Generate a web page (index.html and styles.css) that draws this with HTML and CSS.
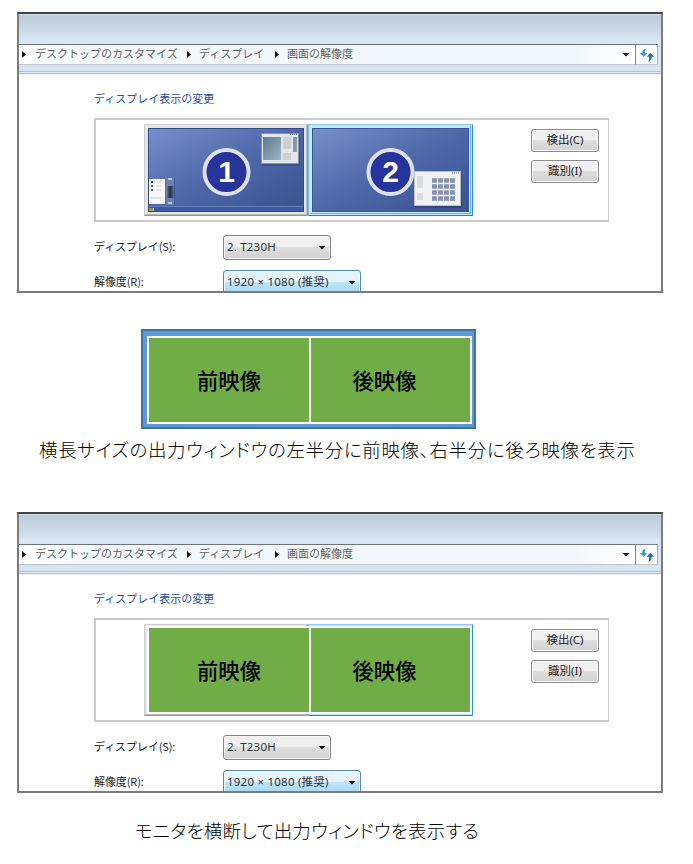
FILE: index.html
```html
<!DOCTYPE html>
<html lang="ja">
<head>
<meta charset="utf-8">
<title>画面の解像度</title>
<link rel="stylesheet" href="styles.css">
</head>
<body>
<main class="page">
  <section class="window">
    <header class="titlebar"></header>
    <nav class="address">
      <div class="crumbs">
        <i class="sep"></i><span class="crumb desktop">デスクトップのカスタマイズ</span>
        <i class="sep"></i><span class="crumb display">ディスプレイ</span>
        <i class="sep"></i><span class="crumb resolution">画面の解像度</span>
        <i class="down"></i>
      </div>
      <div class="refresh">
        <svg width="14" height="14" viewBox="0 0 14 14"><path d="M6 1C3.500 1 2 2.500 2.200 5H0l3.800 4L7.200 5H5C4.700 3.300 4.800 2.100 6 1Z" fill="#3c9bdc"/><path d="M8.200 13.500c2.600-.6 3.700-2.400 3.400-4.800H14L10.200 4.800 6.700 8.700H9c.3 2 .2 3.400-.8 4.800Z" fill="#2468b5"/></svg>
      </div>
    </nav>
    <div class="strip"></div>
    <div class="content">
      <h1 class="heading">ディスプレイ表示の変更</h1>
      <div class="group">
        <div class="monitors">
          <div class="monitor first">
            <svg width="156" height="84" viewBox="0 0 156 84">
              <defs>
                <linearGradient id="desk" x1="0" y1="0" x2="1" y2="1"><stop stop-color="#7890cc"/><stop offset=".5" stop-color="#4d67a9"/><stop offset="1" stop-color="#38528f"/></linearGradient>
                <linearGradient id="pane" x1="0" y1="0" x2="1" y2="1"><stop stop-color="#5f7b8f"/><stop offset="1" stop-color="#9db4c2"/></linearGradient>
                <linearGradient id="shade"><stop stop-color="#8b96ad"/><stop offset=".5" stop-color="#202b46"/><stop offset="1" stop-color="#5a6f9e"/></linearGradient>
              </defs>
              <rect width="156" height="84" fill="url(#desk)"/>
              <rect y="78" width="156" height="1" fill="#6580bb"/><rect y="79" width="156" height="5" fill="#3a5aa6"/>
              <rect x="114" y="7" width="38" height="31" fill="#283e75" opacity=".5"/>
              <rect x="113.500" y="5.500" width="37" height="30" fill="#e3e6e8" stroke="#8a93a3"/>
              <rect x="115" y="9" width="18" height="23" fill="url(#pane)"/>
              <path d="M135 9h8v12h-8zM135 25h8v7h-8z" fill="#cbd0d2"/><rect x="145" y="9" width="4" height="15" fill="#829aad"/>
              <path d="M142 6.500h7" stroke="#667787" stroke-dasharray="1 1"/>
              <path d="M18 50h8v27h-8z" fill="#6a80b3"/><rect x="18" y="58" width="8" height="12" fill="url(#shade)"/><path d="M20 51h4M20 75h4" stroke="#b9c8e2" stroke-width="2"/><path d="M26.500 50v27" stroke="#465d99"/>
              <rect x="1" y="51" width="16" height="25" fill="#f8f8fa"/>
              <path d="M3 54h3M3 58h3M3 62h3" stroke="#596273" stroke-width="2" stroke-dasharray="2 1"/><path d="M8 54h6M8 58h6M8 62h6M3 70h10" stroke="#cbd0d6"/>
              <path d="M1 80h2v3H1z" fill="#d87b3b"/><path d="M3 80h2v3H3z" fill="#63b244"/><path d="M5 80h1v3H5z" fill="#e4ca35"/>
              <circle cx="78.500" cy="44" r="22" fill="#26349b" stroke="#dce0ef" stroke-width="4"/>
              <text x="78.500" y="54" class="number">1</text>
              <rect x=".5" y=".5" width="155" height="83" fill="none" stroke="#32498a"/>
            </svg>
          </div>
          <div class="monitor second">
            <svg width="157" height="84" viewBox="0 0 157 84">
              <rect width="157" height="84" fill="url(#desk)"/>
              <circle cx="78.500" cy="44" r="22" fill="#26349b" stroke="#dce0ef" stroke-width="4"/>
              <text x="78.500" y="54" class="number">2</text>
              <rect x="103" y="46" width="47" height="34" fill="#293d6d" opacity=".55"/>
              <rect x="102.500" y="43.500" width="46" height="34" fill="#f0f2f3" stroke="#bac0ca"/>
              <path d="M105 48h6v12h-6zM105 65h6v7h-6z" fill="#d8dcdf"/>
              <path d="M120 52.500h23M120 58.500h23M120 64.500h23M120 70.500h23" stroke="#8793ac" stroke-width="4.500" stroke-dasharray="5 1"/>
              <path d="M140 45h7" stroke="#7d8794" stroke-dasharray="1 1"/>
              <rect x=".5" y=".5" width="156" height="83" fill="none" stroke="#3a5795"/>
            </svg>
          </div>
        </div>
        <div class="actions"><button>検出(C)</button><button>識別(I)</button></div>
      </div>
      <div class="field"><label>ディスプレイ(S):</label><div class="select narrow"><span class="model">2. T230H</span><i class="down"></i></div></div>
      <div class="field"><label class="short">解像度(R):</label><div class="select wide"><span class="size">1920 × 1080 (推奨)</span><i class="down"></i></div></div>
    </div>
  </section>

  <section class="output"><div class="views"><div>前映像</div><div>後映像</div></div></section>
  <p class="caption long">横長サイズの出力ウィンドウの左半分に前映像、右半分に後ろ映像を表示</p>

  <section class="window">
    <header class="titlebar"></header>
    <nav class="address">
      <div class="crumbs">
        <i class="sep"></i><span class="crumb desktop">デスクトップのカスタマイズ</span>
        <i class="sep"></i><span class="crumb display">ディスプレイ</span>
        <i class="sep"></i><span class="crumb resolution">画面の解像度</span>
        <i class="down"></i>
      </div>
      <div class="refresh">
        <svg width="14" height="14" viewBox="0 0 14 14"><path d="M6 1C3.500 1 2 2.500 2.200 5H0l3.800 4L7.200 5H5C4.700 3.300 4.800 2.100 6 1Z" fill="#3c9bdc"/><path d="M8.200 13.500c2.600-.6 3.700-2.400 3.400-4.800H14L10.200 4.800 6.700 8.700H9c.3 2 .2 3.400-.8 4.800Z" fill="#2468b5"/></svg>
      </div>
    </nav>
    <div class="strip"></div>
    <div class="content">
      <h1 class="heading">ディスプレイ表示の変更</h1>
      <div class="group">
        <div class="monitors">
          <div class="monitor first"></div>
          <div class="monitor second"></div>
          <div class="views overlay"><div>前映像</div><div>後映像</div></div>
        </div>
        <div class="actions"><button>検出(C)</button><button>識別(I)</button></div>
      </div>
      <div class="field"><label>ディスプレイ(S):</label><div class="select narrow"><span class="model">2. T230H</span><i class="down"></i></div></div>
      <div class="field"><label class="short">解像度(R):</label><div class="select wide"><span class="size">1920 × 1080 (推奨)</span><i class="down"></i></div></div>
    </div>
  </section>
  <p class="caption brief">モニタを横断して出力ウィンドウを表示する</p>
</main>
</body>
</html>
```
FILE: styles.css
```css
* { box-sizing: border-box; }
body { margin: 0; background: #fff; font-family: "Noto Sans", "Noto Sans CJK JP", sans-serif; color: #222; }
.page { width: 693px; height: 864px; padding: 12px 0 0 17px; overflow: hidden; }
.window { width: 646px; height: 281px; border: 2px solid #7b7b7b; border-top-color: #444; overflow: hidden; background: #fff; }
.titlebar { height: 30px; background: linear-gradient(#d5e1ec 0, #bdccdb 2px, #c9d8e6 15px, #d9e6f3 26px); }
.address { display: flex; height: 21px; padding-right: 3px; background: #d7e4f1; }
.crumbs { display: flex; align-items: center; flex: 1; border-top: 1px solid #6c737a; border-bottom: 1px solid #c0c5ca; background: linear-gradient(90deg, #fff, #f2f7fb 12%, #f2f7fb 90%, #fff); padding-left: 3px; }
.crumb { font: 11px/16px "Noto Sans CJK JP", sans-serif; color: #5d6266; white-space: nowrap; margin-top: -3px; }
.desktop { width: 144px; margin-left: 9px; margin-right: 8px; }
.display { width: 67px; margin-left: 8px; margin-right: 9px; }
.resolution { width: 66px; margin-left: 8px; }
.sep { width: 4px; height: 7px; background: #111; clip-path: polygon(0 0, 100% 50%, 0 100%); flex: none; }
.down { width: 8px; height: 4px; background: #080808; clip-path: polygon(0 0, 100% 0, 50% 100%); margin-left: auto; flex: none; }
.crumbs .down { margin-right: 5px; background: #100b5d; }
.refresh { width: 23px; border: 1px solid #7b8188; border-right-color: #a5afba; border-bottom-color: #c0c5ca; background: #fbfdff; display: flex; align-items: center; justify-content: center; }
.strip { height: 10px; background: linear-gradient(#d7e4f1 0 6px, #b9bfd1 6px 7px, #e1e9f4 7px 8px, #bfc2d4 8px 9px, #eceef5 9px); }
.content { padding: 15px 52px 0 75px; }
.heading { margin: 0; height: 16px; font: 11px/16px "Noto Sans CJK JP", sans-serif; color: #2850aa; }
.group { display: flex; width: 515px; height: 104px; margin-top: 12px; border: 2px solid #cbcbcb; border-right-width: 1px; padding: 4px 9px 4px 48px; justify-content: space-between; }
.monitors { position: relative; display: flex; height: 92px; }
.monitor { width: 164px; height: 92px; border: 1px solid; padding: 3px; border-radius: 1px; }
.monitor svg { display: block; }
.first { border-color: #d0d0d0 #999 #959595 #cacaca; background: #e5e5e3; box-shadow: inset -1px -1px #bcbcbc; }
.second { width: 165px; border-color: #8accf8 #2493df #1488db #73c4f6; background: #c7eaff; box-shadow: inset 0 0 0 1px #b9e5ff, inset -2px -2px #61bdf4; }
.number { font: bold 30px "Liberation Sans", sans-serif; fill: #fff; text-anchor: middle; }
.actions { width: 68px; display: flex; flex-direction: column; gap: 8px; padding-top: 5px; }
button { width: 68px; height: 23px; padding: 0 0 2px; border: 1px solid #8b8b8b; border-radius: 3px; box-shadow: inset 0 0 0 1px #fafafa; background: linear-gradient(#f0f0f0 0 48%, #dedede 50%, #d1d1d1); font: 11.5px/18px "Noto Sans", "Noto Sans CJK JP", sans-serif; color: #222; }
.field { display: flex; align-items: center; height: 24px; margin-top: 13px; }
.field + .field { margin-top: 11px; }
label { width: 129px; font: 11px/18px "Noto Sans CJK JP", sans-serif; letter-spacing: -.1px; margin-top: -2px; }
.short { letter-spacing: -.1px; }
.select { display: flex; align-items: center; height: 25px; border: 1px solid #858585; border-radius: 3px; padding: 0 4px 0 3px; background: linear-gradient(#f0f0f0 0 48%, #dedede 50%, #d1d1d1); box-shadow: inset 0 0 0 1px #f4f4f4; font: 11.5px/20px "Noto Sans", "Noto Sans CJK JP", sans-serif; color: #333; white-space: nowrap; }
.select .down { margin-top: 1px; }
.model { letter-spacing: .2px; }
.size { letter-spacing: .23px; }
.narrow { width: 108px; }
.wide { width: 138px; border-color: #5689aa; background: linear-gradient(#e5f3fc 0 48%, #bfe3f8 50%, #a3d8f5); box-shadow: inset 0 0 0 1px #eaf7ff; }
.output { width: 335px; height: 100px; margin: 36px 0 0 124px; padding: 5px 2px 3px 4px; border: 2px solid #41719c; background: #5b9bd5; }
.views { width: 325px; height: 88px; display: grid; grid-template-columns: 160px 159px; gap: 2px; padding: 2px; background: #fff; }
.views div { background: #70ad47; color: #000; display: flex; align-items: center; justify-content: center; padding-bottom: 1px; font: 500 21.33px/32px "Noto Sans CJK JP", sans-serif; }
.views div + div { padding-right: 12px; }
.overlay { position: absolute; left: 3px; top: 2px; }
.caption { margin: 0; font: 300 18.5px/30px "Noto Sans CJK JP", sans-serif; font-feature-settings: "palt"; color: #000; white-space: nowrap; text-align-last: justify; }
.long { width: 596px; margin-left: 22px; padding-top: 5px; height: 83px; }
.brief { width: 344px; margin: 22px 0 0 118px; }
```
